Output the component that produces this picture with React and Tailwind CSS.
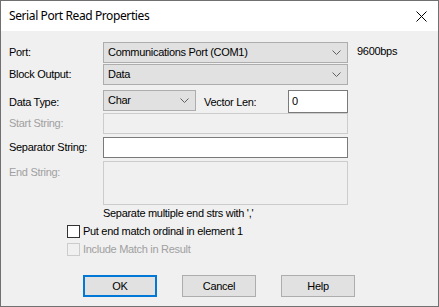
import React from 'react';

const sans = { fontFamily: '"Liberation Sans", Arial, sans-serif' };

// Small chevron used by the combo boxes
const Chevron = () => (
  <svg width="9" height="6" viewBox="0 0 9 6" className="shrink-0">
    <polyline points="0.5,0.5 4.5,4.5 8.5,0.5" fill="none" stroke="#606060" strokeWidth="1" />
  </svg>
);

const Combo = ({ value, className }) => (
  <div className={`flex h-[21px] items-center justify-between border border-[#adadad] bg-[#e1e1e1] pl-[4px] pr-[6px] text-[11px] text-black ${className}`}>
    <span>{value}</span>
    <Chevron />
  </div>
);

const Label = ({ children, disabled }) => (
  <div className={`w-[94px] shrink-0 text-[11px] ${disabled ? 'text-[#a0a0a0]' : 'text-black'}`}>{children}</div>
);

const Check = ({ label, disabled }) => (
  <div className="flex h-[13px] items-center pl-[58px]">
    <div className={`h-[13px] w-[13px] border ${disabled ? 'border-[#cccccc] bg-[#f0f0f0]' : 'border-[#333333] bg-white'}`} />
    <span className={`ml-[3px] text-[11px] ${disabled ? 'text-[#a0a0a0]' : 'text-black'}`}>{label}</span>
  </div>
);

const Button = ({ children, primary }) => (
  <div
    className={`flex h-[22px] w-[74px] items-center justify-center bg-[#e1e1e1] text-[11px] text-black ${
      primary ? 'border-2 border-[#0078d7]' : 'border border-[#adadad]'
    }`}
  >
    {children}
  </div>
);

export default function App() {
  return (
    <div className="flex h-[307px] w-[439px] flex-col border border-[#707070] bg-[#f0f0f0] tracking-[-0.3px]" style={sans}>
      {/* Title bar */}
      <div className="flex h-[30px] shrink-0 items-center justify-between bg-white pl-[8px] pr-[11px]">
        <span className="text-[12px] tracking-[-0.4px] text-black" style={{ fontFamily: '"Noto Sans", "Open Sans", sans-serif' }}>
          Serial Port Read Properties
        </span>
        <svg width="11" height="11" viewBox="0 0 11 11">
          <path d="M0.5 0.5 L10.5 10.5 M10.5 0.5 L0.5 10.5" stroke="#000" strokeWidth="1" />
        </svg>
      </div>

      {/* Body */}
      <div className="flex flex-col pl-[8px]">
        <div className="mt-[11px] flex h-[21px] items-center">
          <Label>Port:</Label>
          <Combo value="Communications Port (COM1)" className="w-[245px]" />
          <span className="ml-[9px] self-start pt-[1px] text-[11px] text-black">9600bps</span>
        </div>

        <div className="mt-[1px] flex h-[21px] items-center">
          <Label>Block Output:</Label>
          <Combo value="Data" className="w-[245px]" />
        </div>

        <div className="mt-[5px] flex h-[23px] items-start">
          <Label>
            <div className="pt-[4px]">Data Type:</div>
          </Label>
          <Combo value="Char" className="w-[93px]" />
          <span className="ml-[8px] w-[84px] pt-[4px] text-[11px] text-black">Vector Len:</span>
          <div className="flex h-[23px] w-[60px] items-center border border-[#7a7a7a] bg-white pl-[3px] text-[11px] text-black">0</div>
        </div>

        <div className="flex h-[21px] items-center">
          <Label disabled>Start String:</Label>
          <div className="h-[21px] w-[245px] border border-[#cccccc] bg-[#f0f0f0]" />
        </div>

        <div className="mt-[3px] flex h-[21px] items-center">
          <Label>Separator String:</Label>
          <div className="h-[21px] w-[245px] border border-[#7a7a7a] bg-white" />
        </div>

        <div className="mt-[3px] flex h-[44px] items-start">
          <Label disabled>
            <div className="pt-[3px]">End String:</div>
          </Label>
          <div className="h-[44px] w-[245px] border border-[#cccccc] bg-[#f0f0f0]" />
        </div>

        <div className="mt-[2px] pl-[94px] text-[11px] leading-[13px] text-black">Separate multiple end strs with ','</div>

        <div className="mt-[5px] flex flex-col gap-[5px]">
          <Check label="Put end match ordinal in element 1" />
          <Check label="Include Match in Result" disabled />
        </div>

        <div className="mt-[19px] flex gap-[25px] pl-[74px]">
          <Button primary>OK</Button>
          <Button>Cancel</Button>
          <Button>Help</Button>
        </div>
      </div>
    </div>
  );
}
